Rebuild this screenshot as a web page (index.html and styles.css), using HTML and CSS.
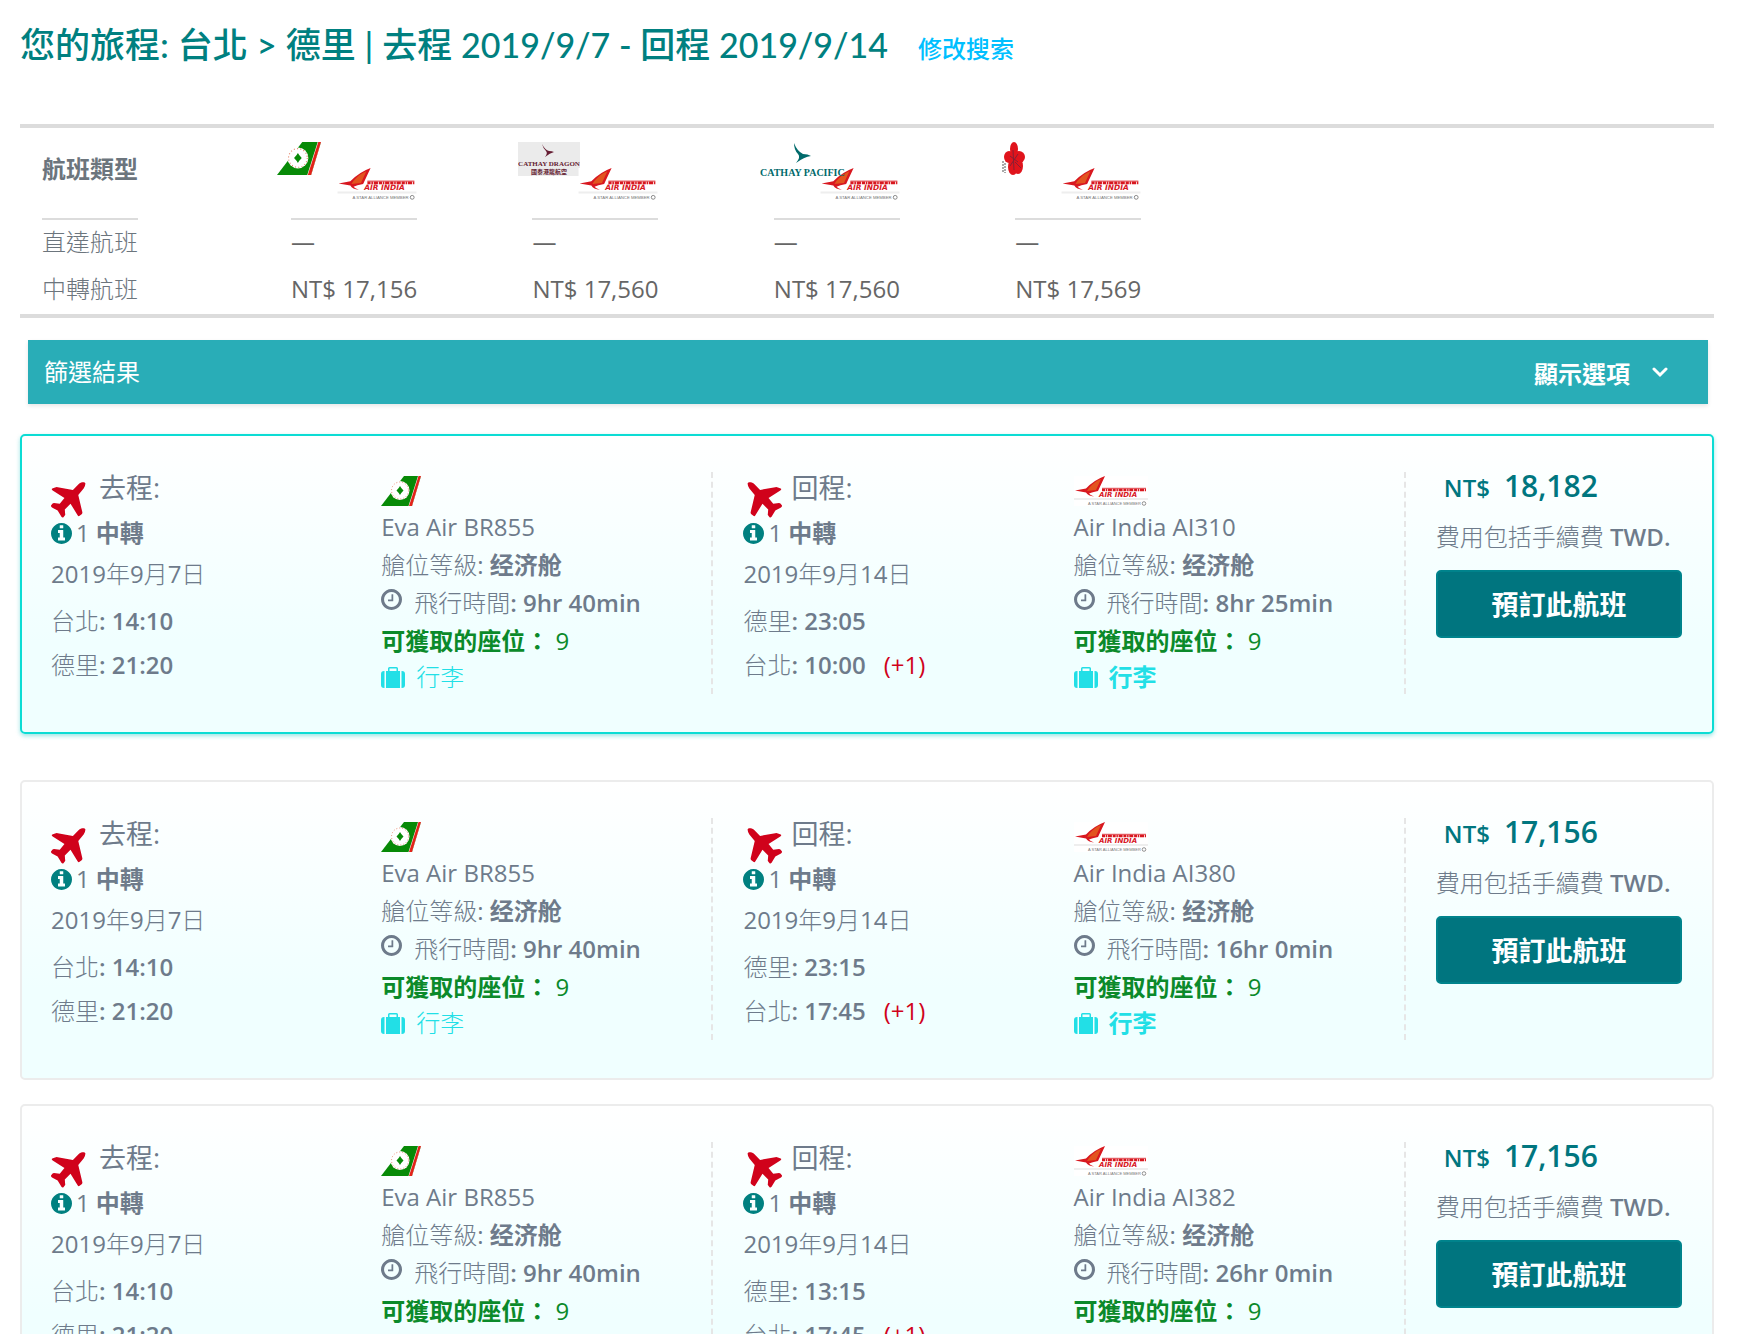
FILE: index.html
```html
<!DOCTYPE html>
<html lang="zh-Hant">
<head>
<meta charset="utf-8">
<meta name="viewport" content="width=device-width, initial-scale=1">
<title>台北 - 德里 航班</title>
<link rel="stylesheet" href="styles.css">
</head>
<body>
<svg class="sprite" aria-hidden="true">
  <symbol id="plane" viewBox="0 0 104 106"><path d="M102 3C100-1 90 0 84 4L65 23 20 15Q16 14 12 16L4 19Q0 21 5 25L40 47 26 64 9 62Q6 62 4 64L0 69Q-1 72 3 75L17 83Q20 84 22 88L31 103Q34 107 37 104L41 99Q43 97 42 94L41 81 58 64 79 98Q82 103 85 100L91 95Q94 93 93 89L81 38 97 19Q103 9 102 3Z"/></symbol>
  <symbol id="info" viewBox="128 128 1536 1536"><path d="M1152 1376v-160q0-14-9-23t-23-9h-96v-512q0-14-9-23t-23-9h-320q-14 0-23 9t-9 23v160q0 14 9 23t23 9h96v320h-96q-14 0-23 9t-9 23v160q0 14 9 23t23 9h448q14 0 23-9t9-23zm-128-896v-160q0-14-9-23t-23-9h-192q-14 0-23 9t-9 23v160q0 14 9 23t23 9h192q14 0 23-9t9-23zm640 416q0 209-103 385.5t-279.5 279.5-385.5 103-385.5-103-279.5-279.5-103-385.5 103-385.5 279.5-279.5 385.5-103 385.5 103 279.5 279.5 103 385.5z"/></symbol>
  <symbol id="clock" viewBox="128 128 1536 1536"><path d="M1024 544v448q0 14-9 23t-23 9h-320q-14 0-23-9t-9-23v-64q0-14 9-23t23-9h224v-352q0-14 9-23t23-9h64q14 0 23 9t9 23zm416 352q0-148-73-273t-198-198-273-73-273 73-198 198-73 273 73 273 198 198 273 73 273-73 198-198 73-273zm224 0q0 209-103 385.5t-279.5 279.5-385.5 103-385.5-103-279.5-279.5-103-385.5 103-385.5 279.5-279.5 385.5-103 385.5 103 279.5 279.5 103 385.5z"/></symbol>
  <symbol id="bag" viewBox="0 0 24 21"><path d="M3.5 4V21H3Q0 21 0 18V7Q0 4 3 4ZM20.500 4H21Q24 4 24 7V18Q24 21 21 21H20.500ZM5 21V4H7V1.500Q7 0 8.500 0H15.500Q17 0 17 1.500V4H19V21ZM8.500 4H15.500V1.500H8.500Z"/></symbol>
  <symbol id="eva" viewBox="0 0 40 30"><path fill="#078a07" d="M23 0H40L31 30H0Z"/><path fill="#fff" d="M37 0H40L31 30H27.500Z"/><path fill="#e2231a" d="M37.500 0H40L31 30H28Z"/><circle cx="19" cy="14.500" r="9.500" fill="#fff"/><circle cx="19" cy="14.500" r="8.500" fill="none" stroke="#e58a70" stroke-dasharray="1 2"/><path fill="#078a07" d="M19 10Q20 12 22.500 14.500Q20 17 19 19Q18 17 15.500 14.500Q18 12 19 10Z"/></symbol>
  <symbol id="airindia" viewBox="0 0 74 30"><path fill="#fff" d="M0 0H74V30H0Z"/><path fill="#d8171f" d="M1 14.500L12 12.500Q20 4 31 0L24 15Q18 16 15 17.500Q16 19 20 20.500Q14 20 12 16.500Z"/><path fill="#e2541f" d="M15 12Q21 5 27 3L22 14Q17 14.500 13 15Z"/><path fill="none" stroke="#d8171f" stroke-width="2.500" d="M28 14H72" stroke-dasharray="3 .7 1.500 .7 4 .8"/><path stroke="#d8171f" stroke-width=".8" d="M28 12.300H72"/><text x="25" y="21" fill="#d8171f" class="ai-name">AIR INDIA</text><path fill="#eee" d="M0 22H74V24H0Z"/><text x="14" y="29" fill="#777" class="ai-sub">A STAR ALLIANCE MEMBER</text><circle cx="70" cy="27.500" r="1.800" fill="none" stroke="#777" stroke-width=".8"/></symbol>
  <symbol id="dragon" viewBox="0 0 62 34"><path fill="#ebebeb" d="M0 0H62V34H0Z"/><path fill="#651c32" d="M24 2Q27 8 31 9Q34 9 36 10Q32 11 27 15Q30 11 28 9Q25 6 24 2Z"/><text x="31" y="24" text-anchor="middle" fill="#651c32" class="cx-name">CATHAY DRAGON</text><text x="31" y="32" text-anchor="middle" fill="#651c32" class="cx-sub">國泰港龍航空</text></symbol>
  <symbol id="cathay" viewBox="0 0 86 34"><path fill="#006a6b" d="M34 1Q37 9 43 12Q48 12 51 14Q44 15 36 21Q41 15 38 12Q34 8 34 1Z"/><text x="0" y="34" fill="#006a6b" class="cp-name">CATHAY PACIFIC</text></symbol>
  <symbol id="blossom" viewBox="0 0 24 34"><g fill="#e0141c"><ellipse cx="13" cy="7" rx="4" ry="7"/><ellipse cx="8" cy="15" rx="5" ry="6"/><ellipse cx="18" cy="15" rx="6" ry="6"/><ellipse cx="12" cy="25" rx="5" ry="8"/><ellipse cx="17" cy="24" rx="5" ry="8"/></g><path d="M9 14L17 20M12 8L13 28M17 12L9 24M14 20L20 26" stroke="#852035" fill="none"/><path d="M2 19V31M4 21V31" stroke="#555" stroke-dasharray="2 1"/></symbol>
</svg>

<main class="page">
  <header class="trip">
    <h1 class="trip-title">您的旅程: 台北 &gt; 德里 | 去程 <span class="trip-date">2019/9/7 - </span>回程 <span class="trip-date">2019/9/14</span></h1>
    <a class="trip-edit" href="#">修改搜索</a>
  </header>

  <table class="summary">
    <thead>
      <tr>
        <th class="label" scope="col"><span class="head-cell">航班類型</span></th>
        <th scope="col"><span class="head-cell logos"><span class="slot"><svg width="44" height="33" role="img" aria-label="Eva Air"><use href="#eva"/></svg></span><svg class="second" width="80" height="32" role="img" aria-label="Air India"><use href="#airindia"/></svg></span></th>
        <th scope="col"><span class="head-cell logos"><span class="slot"><svg width="62" height="34" role="img" aria-label="Cathay Dragon"><use href="#dragon"/></svg></span><svg class="second" width="80" height="32" role="img" aria-label="Air India"><use href="#airindia"/></svg></span></th>
        <th scope="col"><span class="head-cell logos"><span class="slot over"><svg width="86" height="34" role="img" aria-label="Cathay Pacific"><use href="#cathay"/></svg></span><svg class="second" width="80" height="32" role="img" aria-label="Air India"><use href="#airindia"/></svg></span></th>
        <th scope="col"><span class="head-cell logos"><span class="slot"><svg width="24" height="34" role="img" aria-label="China Airlines"><use href="#blossom"/></svg></span><svg class="second" width="80" height="32" role="img" aria-label="Air India"><use href="#airindia"/></svg></span></th>
        <td></td>
      </tr>
    </thead>
    <tbody>
      <tr class="direct"><th class="label" scope="row">直達航班</th><td>—</td><td>—</td><td>—</td><td>—</td><td></td></tr>
      <tr class="transfer"><th class="label" scope="row">中轉航班</th><td>NT$ 17,156</td><td>NT$ 17,560</td><td>NT$ 17,560</td><td>NT$ 17,569</td><td></td></tr>
    </tbody>
  </table>

  <section class="filter">
    <span>篩選結果</span>
    <button class="filter-toggle" type="button">顯示選項
      <svg width="16" height="12" viewBox="0 0 16 12" aria-hidden="true"><path d="M2 3L8 9L14 3" fill="none" stroke="currentColor" stroke-width="3" stroke-linecap="round"/></svg>
    </button>
  </section>

  <article class="card featured">
    <section class="leg">
      <div class="route">
        <h2 class="leg-title"><span class="plane-box"><svg class="plane" width="35" height="36"><use href="#plane"/></svg></span>去程:</h2>
        <p class="stops"><svg class="info" width="21" height="21"><use href="#info"/></svg>1 <b>中轉</b></p>
        <p class="date"><span>2019</span>年<span>9</span>月<span>7</span>日</p>
        <p class="time">台北<span>: 14:10</span></p>
        <p class="time">德里<span>: 21:20</span></p>
      </div>
      <div class="flight">
        <svg class="carrier" width="40" height="30" role="img" aria-label="Eva Air"><use href="#eva"/></svg>
        <p><span>Eva Air BR855</span></p>
        <p>艙位等級<span>: </span><b lang="zh-Hans">经济舱</b></p>
        <p class="duration"><svg class="clock" width="21" height="21"><use href="#clock"/></svg>飛行時間<span>: 9hr 40min</span></p>
        <p class="seats"><b>可獲取的座位：</b><span> 9</span></p>
        <a class="baggage" href="#"><svg width="24" height="21"><use href="#bag"/></svg>行李</a>
      </div>
    </section>
    <section class="leg return">
      <div class="route">
        <h2 class="leg-title"><span class="plane-box"><svg class="plane" width="35" height="36"><use href="#plane"/></svg></span>回程:</h2>
        <p class="stops"><svg class="info" width="21" height="21"><use href="#info"/></svg>1 <b>中轉</b></p>
        <p class="date"><span>2019</span>年<span>9</span>月<span>14</span>日</p>
        <p class="time">德里<span>: 23:05</span></p>
        <p class="time">台北<span>: 10:00</span><span class="plus">(+1)</span></p>
      </div>
      <div class="flight">
        <svg class="carrier" width="74" height="30" role="img" aria-label="Air India"><use href="#airindia"/></svg>
        <p><span>Air India AI310</span></p>
        <p>艙位等級<span>: </span><b lang="zh-Hans">经济舱</b></p>
        <p class="duration"><svg class="clock" width="21" height="21"><use href="#clock"/></svg>飛行時間<span>: 8hr 25min</span></p>
        <p class="seats"><b>可獲取的座位：</b><span> 9</span></p>
        <a class="baggage strong" href="#"><svg width="24" height="21"><use href="#bag"/></svg>行李</a>
      </div>
    </section>
    <section class="fare">
      <p class="price"><span class="currency">NT$</span>18,182</p>
      <p class="fee">費用包括手續費 <span>TWD.</span></p>
      <button class="book" type="button">預訂此航班</button>
    </section>
  </article>

  <article class="card">
    <section class="leg">
      <div class="route">
        <h2 class="leg-title"><span class="plane-box"><svg class="plane" width="35" height="36"><use href="#plane"/></svg></span>去程:</h2>
        <p class="stops"><svg class="info" width="21" height="21"><use href="#info"/></svg>1 <b>中轉</b></p>
        <p class="date"><span>2019</span>年<span>9</span>月<span>7</span>日</p>
        <p class="time">台北<span>: 14:10</span></p>
        <p class="time">德里<span>: 21:20</span></p>
      </div>
      <div class="flight">
        <svg class="carrier" width="40" height="30" role="img" aria-label="Eva Air"><use href="#eva"/></svg>
        <p><span>Eva Air BR855</span></p>
        <p>艙位等級<span>: </span><b lang="zh-Hans">经济舱</b></p>
        <p class="duration"><svg class="clock" width="21" height="21"><use href="#clock"/></svg>飛行時間<span>: 9hr 40min</span></p>
        <p class="seats"><b>可獲取的座位：</b><span> 9</span></p>
        <a class="baggage" href="#"><svg width="24" height="21"><use href="#bag"/></svg>行李</a>
      </div>
    </section>
    <section class="leg return">
      <div class="route">
        <h2 class="leg-title"><span class="plane-box"><svg class="plane" width="35" height="36"><use href="#plane"/></svg></span>回程:</h2>
        <p class="stops"><svg class="info" width="21" height="21"><use href="#info"/></svg>1 <b>中轉</b></p>
        <p class="date"><span>2019</span>年<span>9</span>月<span>14</span>日</p>
        <p class="time">德里<span>: 23:15</span></p>
        <p class="time">台北<span>: 17:45</span><span class="plus">(+1)</span></p>
      </div>
      <div class="flight">
        <svg class="carrier" width="74" height="30" role="img" aria-label="Air India"><use href="#airindia"/></svg>
        <p><span>Air India AI380</span></p>
        <p>艙位等級<span>: </span><b lang="zh-Hans">经济舱</b></p>
        <p class="duration"><svg class="clock" width="21" height="21"><use href="#clock"/></svg>飛行時間<span>: 16hr 0min</span></p>
        <p class="seats"><b>可獲取的座位：</b><span> 9</span></p>
        <a class="baggage strong" href="#"><svg width="24" height="21"><use href="#bag"/></svg>行李</a>
      </div>
    </section>
    <section class="fare">
      <p class="price"><span class="currency">NT$</span>17,156</p>
      <p class="fee">費用包括手續費 <span>TWD.</span></p>
      <button class="book" type="button">預訂此航班</button>
    </section>
  </article>

  <article class="card">
    <section class="leg">
      <div class="route">
        <h2 class="leg-title"><span class="plane-box"><svg class="plane" width="35" height="36"><use href="#plane"/></svg></span>去程:</h2>
        <p class="stops"><svg class="info" width="21" height="21"><use href="#info"/></svg>1 <b>中轉</b></p>
        <p class="date"><span>2019</span>年<span>9</span>月<span>7</span>日</p>
        <p class="time">台北<span>: 14:10</span></p>
        <p class="time">德里<span>: 21:20</span></p>
      </div>
      <div class="flight">
        <svg class="carrier" width="40" height="30" role="img" aria-label="Eva Air"><use href="#eva"/></svg>
        <p><span>Eva Air BR855</span></p>
        <p>艙位等級<span>: </span><b lang="zh-Hans">经济舱</b></p>
        <p class="duration"><svg class="clock" width="21" height="21"><use href="#clock"/></svg>飛行時間<span>: 9hr 40min</span></p>
        <p class="seats"><b>可獲取的座位：</b><span> 9</span></p>
        <a class="baggage" href="#"><svg width="24" height="21"><use href="#bag"/></svg>行李</a>
      </div>
    </section>
    <section class="leg return">
      <div class="route">
        <h2 class="leg-title"><span class="plane-box"><svg class="plane" width="35" height="36"><use href="#plane"/></svg></span>回程:</h2>
        <p class="stops"><svg class="info" width="21" height="21"><use href="#info"/></svg>1 <b>中轉</b></p>
        <p class="date"><span>2019</span>年<span>9</span>月<span>14</span>日</p>
        <p class="time">德里<span>: 13:15</span></p>
        <p class="time">台北<span>: 17:45</span><span class="plus">(+1)</span></p>
      </div>
      <div class="flight">
        <svg class="carrier" width="74" height="30" role="img" aria-label="Air India"><use href="#airindia"/></svg>
        <p><span>Air India AI382</span></p>
        <p>艙位等級<span>: </span><b lang="zh-Hans">经济舱</b></p>
        <p class="duration"><svg class="clock" width="21" height="21"><use href="#clock"/></svg>飛行時間<span>: 26hr 0min</span></p>
        <p class="seats"><b>可獲取的座位：</b><span> 9</span></p>
        <a class="baggage strong" href="#"><svg width="24" height="21"><use href="#bag"/></svg>行李</a>
      </div>
    </section>
    <section class="fare">
      <p class="price"><span class="currency">NT$</span>17,156</p>
      <p class="fee">費用包括手續費 <span>TWD.</span></p>
      <button class="book" type="button">預訂此航班</button>
    </section>
  </article>
</main>
</body>
</html>
```
FILE: styles.css
```css
* { box-sizing: border-box; }

body {
  margin: 0;
  background: #fff;
  color: #6e7b8b;
  font: 300 24px/38px "Open Sans", "Noto Sans CJK TC", sans-serif;
}

p, h1, h2 { margin: 0; }
a { text-decoration: none; }
svg { flex: none; }
button { font-family: inherit; cursor: pointer; }
.sprite { display: none; }

.page { padding: 0 26px 24px 20px; }

/* Trip heading */
.trip {
  display: flex;
  align-items: baseline;
  gap: 30px;
  height: 124px;
  padding-top: 19px;
}
.trip-title {
  color: #008080;
  font: 500 35px/50px Lato, "Noto Sans CJK TC", sans-serif;
}
.trip-date { font-size: 34px; }
.trip-edit { color: #00bfff; font-weight: 500; }

/* Cheapest fare per carrier */
.summary {
  width: 100%;
  table-layout: fixed;
  border-collapse: separate;
  border-spacing: 0;
  border-top: 4px solid #dcdcdc;
  border-bottom: 4px solid #dcdcdc;
}
.summary th, .summary td {
  width: 14.25%;
  padding: 0;
  color: #666;
  font-weight: 500;
  text-align: left;
  vertical-align: top;
}
.summary .label { width: 16%; padding-left: 22px; color: #6c757d; font-weight: 300; }
.summary td:last-child { width: auto; }
.head-cell {
  display: block;
  width: 96px;
  height: 92px;
  padding-top: 14px;
  border-bottom: 2px solid #dcdcdc;
  font-weight: 700;
  line-height: 54px;
}
.logos { display: flex; width: 126px; }
.slot { display: flex; flex: none; width: 60px; height: 34px; margin-left: -14px; }
.second { margin-top: 26px; }
.over svg { z-index: 1; }
.direct { line-height: 44px; }
.transfer { line-height: 50px; }

/* Filter bar */
.filter {
  display: flex;
  align-items: center;
  justify-content: space-between;
  height: 64px;
  margin: 22px 6px 30px 8px;
  padding: 0 40px 0 16px;
  background: #29adb7;
  box-shadow: 0 2px 4px rgba(0, 0, 0, .1);
  color: #fff;
  font-weight: 400;
}
.filter-toggle {
  display: flex;
  align-items: center;
  gap: 22px;
  padding: 0;
  border: 0;
  background: none;
  color: #fff;
  font-size: 24px;
  font-weight: 700;
}

/* Result cards */
.card {
  display: grid;
  grid-template-columns: 662fr 662fr 246fr;
  column-gap: 30px;
  margin-bottom: 24px;
  padding: 36px 30px 38px 29px;
  border: 2px solid #ececec;
  border-radius: 5px;
  background: linear-gradient(#fff, #f0ffff 70%);
}
.card.featured {
  margin-bottom: 46px;
  border-color: #0cdcd4;
  box-shadow: 0 2px 4px rgba(12, 190, 190, .4);
}
.card span { font-weight: 500; }
.card b { font-weight: 700; }
.card .time span, .card .duration span, .card .fee span { font-weight: 600; }
.card .time .plus { font-weight: 500; }

.leg {
  display: grid;
  grid-template-columns: 1fr 1fr;
  border-right: 2px dashed #e6e6e6;
}
.leg-title {
  display: flex;
  height: 45px;
  font-size: 27px;
  font-weight: 400;
  line-height: 32px;
}
.plane-box { display: flex; width: 48px; padding-top: 10px; }
.plane { fill: #d0021b; }
.return .plane-box { padding-left: 4px; }
.return .plane { transform: scaleX(-1); }
.stops { display: flex; align-items: center; gap: 4px; font-weight: 400; line-height: 32px; }
.stops b { margin-left: 2px; }
.info { fill: #008080; }
.date { line-height: 50px; }
.time { line-height: 44px; }
.plus { margin-left: 18px; color: #d0021b; }

.flight { padding-top: 4px; }
.carrier { display: block; margin-bottom: 2px; }
.duration { display: flex; }
.duration span { white-space: pre; }
.clock { margin: 5px 12px 0 0; fill: currentColor; }
.seats { color: #0b8a2a; }
.baggage {
  display: flex;
  align-items: center;
  gap: 11px;
  color: #22dfe6;
  line-height: 34px;
}
.baggage svg { fill: currentColor; }
.baggage.strong { font-weight: 700; }

/* Fare column */
.price {
  padding-left: 8px;
  color: #00767f;
  font-size: 30px;
  font-weight: 600;
  line-height: 28px;
}
.card .currency { margin-right: 14px; font-size: 24px; font-weight: 600; }
.fee { margin: 16px 0 14px; white-space: nowrap; }
.book {
  width: 100%;
  height: 68px;
  padding: 0 0 2px;
  border: 2px solid #00838c;
  border-radius: 5px;
  background: #00757f;
  color: #fff;
  font-size: 27px;
  font-weight: 700;
}

/* Lettering inside the carrier marks */
.ai-name { font: italic 700 7px "DejaVu Sans", sans-serif; }
.ai-sub { font: 400 4px "Liberation Sans", sans-serif; }
.cx-name { font: 700 7px "Liberation Serif", serif; }
.cx-sub { font: 700 6px "Noto Sans CJK TC", sans-serif; }
.cp-name { font: 700 10px "Liberation Serif", serif; }
```
